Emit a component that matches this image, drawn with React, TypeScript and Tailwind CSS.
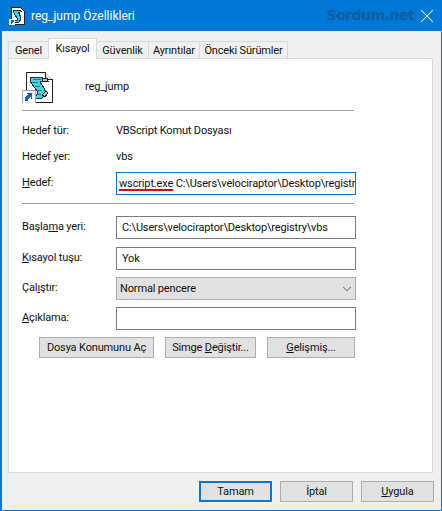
import { ChevronDown, X } from "lucide-react";
import type { ReactNode } from "react";

const FONT = "font-['Roboto','Noto_Sans',sans-serif]";

function ScriptIcon({ size }: { size: number }) {
  return (
    <svg width={size} height={size} viewBox="0 0 32 32" shapeRendering="crispEdges">
      <path d="M4 1h19l7 7v23H4z" fill="#fff" stroke="#222" strokeWidth="1" />
      <path d="M23 1v7h7" fill="#ddd" stroke="#222" strokeWidth="1" />
      <path
        d="M8 6h12l3 3-5 2 4 6 2 5-4 5H9l-2-3h8l1-3-4-5-4-6z"
        fill="#4fd0d8"
        stroke="#16324a"
        strokeWidth="1"
      />
      <path d="M11 8h8M10 11h6M13 15h5M15 19h5M14 23h5" stroke="#0a7f96" strokeWidth="1" />
      <path d="M20 7h5l1 3h-5zM20 24l4-4 2 2-3 4z" fill="#b8bcc0" stroke="#222" strokeWidth="1" />
      <rect x="0" y="19" width="13" height="13" fill="#f4f6fa" stroke="#a8a8a8" strokeWidth="1" />
      <path d="M3 30v-4l3-3h-2l1-1h5v5l-1 1v-2l-3 2v2z" fill="#1f5fae" />
    </svg>
  );
}

function SmallIcon() {
  return (
    <svg width="16" height="18" viewBox="0 0 32 36" shapeRendering="crispEdges">
      <path d="M4 1h19l7 7v27H4z" fill="#fff" stroke="#222" strokeWidth="2" />
      <path d="M9 6h12l3 3-5 2 4 8 1 5-4 6H10l-2-3h8l1-3-4-7-4-7z" fill="#4fd0d8" stroke="#16324a" strokeWidth="2" />
      <rect x="0" y="24" width="12" height="12" fill="#f4f6fa" />
      <path d="M3 34v-4l3-3H4l1-1h5v5l-1 1v-2l-3 2v2z" fill="#1f5fae" />
    </svg>
  );
}

function Tab({ label, active, w }: { label: string; active?: boolean; w: string }) {
  return (
    <div
      className={`${w} flex items-center justify-center whitespace-nowrap border border-[#d9d9d9] ${
        active
          ? "relative z-10 h-[21px] -mb-px border-b-0 bg-white pb-[2px]"
          : "h-[17px] -ml-px border-b-0 bg-[#f0f0f0]"
      }`}
    >
      {label}
    </div>
  );
}

function Row({ label, children, className }: { label: ReactNode; children: ReactNode; className: string }) {
  return (
    <div className={`flex items-center ${className}`}>
      <div className="mt-[-2px] w-[94px] shrink-0">{label}</div>
      {children}
    </div>
  );
}

function Field({ children, focused }: { children?: ReactNode; focused?: boolean }) {
  return (
    <div
      className={`flex h-[23px] w-[240px] items-center overflow-hidden whitespace-nowrap border bg-white ${
        focused ? "border-[#0078d7] pl-[2px]" : "border-[#7a7a7a] pl-[5px]"
      }`}
    >
      {children}
    </div>
  );
}

function Btn({ children, w, primary }: { children: ReactNode; w: string; primary?: boolean }) {
  return (
    <button
      type="button"
      className={`flex h-[21px] ${w} items-center justify-center whitespace-nowrap bg-[#e1e1e1] ${
        primary ? "border-2 border-[#0078d7]" : "border border-[#adadad]"
      }`}
    >
      {children}
    </button>
  );
}

export default function App() {
  return (
    <div
      className={`${FONT} flex h-[511px] w-[442px] flex-col border-b border-l-2 border-r border-[#0078d7] bg-[#f0f0f0] text-[11px] leading-none tracking-[-0.15px] text-[#111]`}
    >
      <div className="flex h-[31px] shrink-0 items-center bg-[#0078d7] text-white">
        <div className="ml-[7px] flex w-[16px] justify-center">
          <SmallIcon />
        </div>
        <span className="ml-[6px] text-[12px] tracking-normal">reg_jump Özellikleri</span>
        <span className="ml-auto mt-[-1px] font-['DejaVu_Sans',sans-serif] text-[14px] font-bold tracking-[-0.5px] text-[#0a5ea9] [text-shadow:0_0_2px_#1a6fb8]">
          Sordum.net
        </span>
        <X className="ml-[2px] mr-[3px] size-[22px]" strokeWidth={1.1} />
      </div>

      <div className="ml-[7px] mt-[7px] flex h-[20px] shrink-0 items-end">
        <Tab label="Genel" w="w-[41px]" />
        <Tab label="Kısayol" w="w-[49px] -ml-px" active />
        <Tab label="Güvenlik" w="w-[53px]" />
        <Tab label="Ayrıntılar" w="w-[52px]" />
        <Tab label="Önceki Sürümler" w="w-[89px]" />
      </div>

      <div className="ml-[6px] flex h-[415px] w-[425px] shrink-0 flex-col border border-[#d9d9d9] bg-white pl-[13px]">
        <div className="flex h-[51px] shrink-0 items-center">
          <div className="mt-[5px]">
            <ScriptIcon size={32} />
          </div>
          <span className="ml-[31px] mt-[3px]">reg_jump</span>
        </div>
        <div className="h-px w-[332px] shrink-0 bg-[#a0a0a0]" />

        <Row label="Hedef tür:" className="mt-[12px] h-[16px]">
          <span className="mt-[-2px]">VBScript Komut Dosyası</span>
        </Row>
        <Row label="Hedef yer:" className="mt-[10px] h-[16px]">
          <span className="mt-[-2px]">vbs</span>
        </Row>
        <Row label={<><u>H</u>edef:</>} className="mt-[7px]">
          <Field focused>
            <span className="underline decoration-[#e00000] decoration-2 underline-offset-[2px]">wscript.exe</span>
            &nbsp;C:\Users\velociraptor\Desktop\registry\vbs\reg_jump.vbs
          </Field>
        </Row>
        <div className="mt-[8px] h-px w-[332px] shrink-0 bg-[#a0a0a0]" />

        <Row label={<>Başla<u>m</u>a yeri:</>} className="mt-[12px]">
          <Field>C:\Users\velociraptor\Desktop\registry\vbs</Field>
        </Row>
        <Row label={<><u>K</u>ısayol tuşu:</>} className="mt-[8px]">
          <Field>Yok</Field>
        </Row>
        <Row label={<>Çal<u>ı</u>ştır:</>} className="mt-[7px]">
          <div className="flex h-[23px] w-[240px] items-center justify-between border border-[#adadad] bg-[#e1e1e1] pl-[3px] pr-[1px]">
            <span>Normal pencere</span>
            <ChevronDown className="size-[14px] text-[#222]" strokeWidth={1.2} />
          </div>
        </Row>
        <Row label={<><u>A</u>çıklama:</>} className="mt-[7px]">
          <Field />
        </Row>

        <div className="ml-[17px] mt-[7px] flex gap-[11px]">
          <Btn w="w-[115px]">Dosya Konumunu Aç</Btn>
          <Btn w="w-[91px]">
            <span>Simge <u>D</u>eğiştir...</span>
          </Btn>
          <Btn w="w-[88px]">
            <span><u>G</u>elişmiş...</span>
          </Btn>
        </div>
      </div>

      <div className="ml-[197px] mt-[8px] flex gap-[8px]">
        <Btn w="w-[73px]" primary>Tamam</Btn>
        <Btn w="w-[73px]">İptal</Btn>
        <Btn w="w-[73px]">
          <span><u>U</u>ygula</span>
        </Btn>
      </div>
    </div>
  );
}
